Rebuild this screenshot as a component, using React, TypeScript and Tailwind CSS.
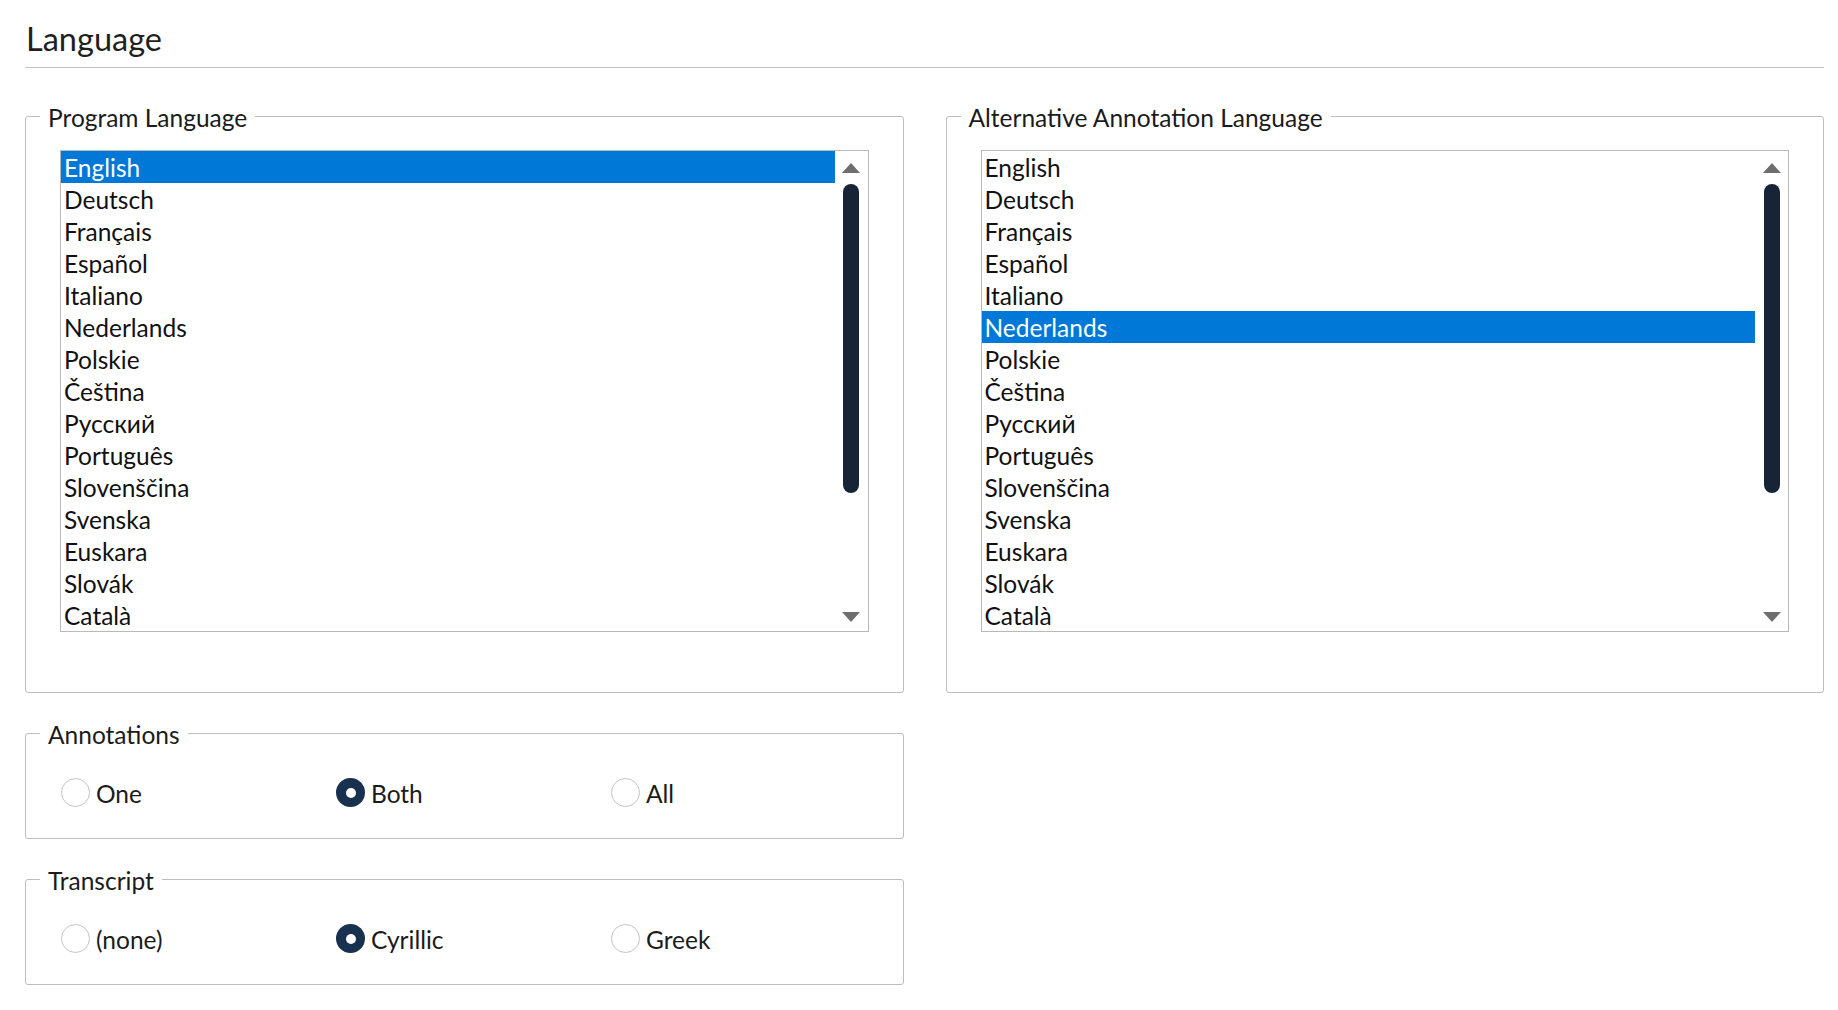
import type { ReactNode } from 'react'

const LANGUAGES = [
  'English', 'Deutsch', 'Français', 'Español', 'Italiano', 'Nederlands', 'Polskie', 'Čeština',
  'Русский', 'Português', 'Slovenščina', 'Svenska', 'Euskara', 'Slovák', 'Català',
]

const FONT = "font-['Lato','Noto_Sans',sans-serif]"

function Group({ title, children, className = '' }: { title: string; children: ReactNode; className?: string }) {
  return (
    <fieldset className={`border border-[#bdbdbd] rounded-[3px] w-[879px] ${className}`}>
      <legend className="ml-[14px] px-2 pt-[4px] text-[24.5px] leading-[28px] text-[#1b1b1b]">{title}</legend>
      {children}
    </fieldset>
  )
}

function ListBox({ selected }: { selected: string }) {
  return (
    <div className="mt-[18px] mx-[34px] h-[482px] border border-[#b9b9b9] flex bg-white">
      <ul className="flex-1 flex flex-col">
        {LANGUAGES.map(l => (
          <li key={l}
            className={`h-8 shrink-0 pl-[3px] pt-[2px] text-[24.5px] leading-[30px] ${l === selected ? 'bg-[#0078d7] text-white' : 'text-[#111]'}`}>
            {l}
          </li>
        ))}
      </ul>
      <div className="w-[33px] flex flex-col items-center pt-3 pb-[9px]">
        <svg width="18" height="10" viewBox="0 0 18 10"><path d="M9 0 L18 10 L0 10 Z" fill="#6e6e6e" /></svg>
        <div className="mt-[11px] w-4 h-[309px] rounded-full bg-[#172435]" />
        <div className="flex-1" />
        <svg width="18" height="10" viewBox="0 0 18 10"><path d="M0 0 L18 0 L9 10 Z" fill="#6e6e6e" /></svg>
      </div>
    </div>
  )
}

function Radio({ label, checked }: { label: string; checked?: boolean }) {
  return (
    <div className="w-[275px] flex items-center gap-[6px]">
      {checked ? (
        <span className="w-[29px] h-[29px] rounded-full bg-[#17314f] flex items-center justify-center">
          <span className="w-[10px] h-[10px] rounded-full bg-white" />
        </span>
      ) : (
        <span className="w-[29px] h-[29px] rounded-full border border-[#c4c4c4] bg-white" />
      )}
      <span className="h-[29px] pt-[2px] text-[24.5px] leading-[27px] text-[#1b1b1b]">{label}</span>
    </div>
  )
}

function RadioRow({ options, value }: { options: string[]; value: string }) {
  return (
    <div className="flex pl-[35px] mt-[29px] pb-[31px]">
      {options.map(o => <Radio key={o} label={o} checked={o === value} />)}
    </div>
  )
}

export default function App() {
  return (
    <div className={`w-[1838px] h-[1010px] bg-white pl-[25px] pr-[14px] pt-[19px] ${FONT}`}>
      <h1 className="text-[32.5px] leading-[40px] text-[#1f1f1f] pl-[1px]">Language</h1>
      <div className="mt-[8px] border-t border-[#c2c2c2]" />

      <div className="flex gap-[42px] mt-[32px]">
        <Group title="Program Language" className="pb-[60px]">
          <ListBox selected="English" />
        </Group>
        <Group title="Alternative Annotation Language" className="pb-[60px]">
          <ListBox selected="Nederlands" />
        </Group>
      </div>

      <Group title="Annotations" className="mt-[24px]">
        <RadioRow options={['One', 'Both', 'All']} value="Both" />
      </Group>

      <Group title="Transcript" className="mt-[24px]">
        <RadioRow options={['(none)', 'Cyrillic', 'Greek']} value="Cyrillic" />
      </Group>
    </div>
  )
}
